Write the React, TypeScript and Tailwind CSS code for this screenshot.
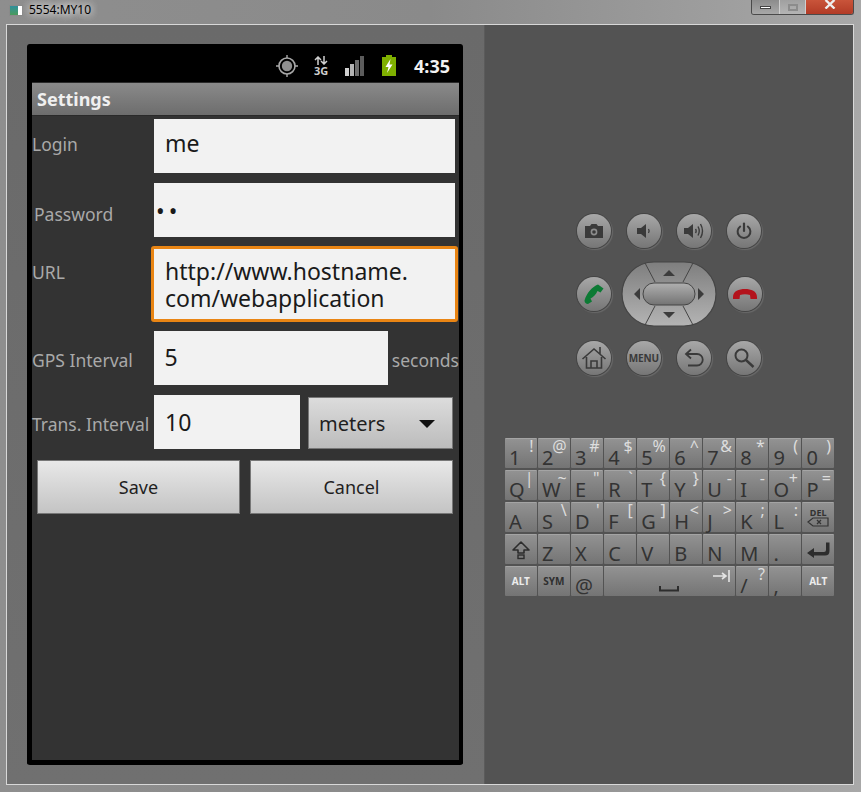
import type { ReactNode } from "react";

type KeyDef = { main?: ReactNode; alt?: string };

const keyRows: KeyDef[][] = [
  [
    { main: "1", alt: "!" },
    { main: "2", alt: "@" },
    { main: "3", alt: "#" },
    { main: "4", alt: "$" },
    { main: "5", alt: "%" },
    { main: "6", alt: "^" },
    { main: "7", alt: "&" },
    { main: "8", alt: "*" },
    { main: "9", alt: "(" },
    { main: "0", alt: ")" },
  ],
  [
    { main: "Q", alt: "|" },
    { main: "W", alt: "~" },
    { main: "E", alt: "\"" },
    { main: "R", alt: "`" },
    { main: "T", alt: "{" },
    { main: "Y", alt: "}" },
    { main: "U", alt: "-" },
    { main: "I", alt: "-" },
    { main: "O", alt: "+" },
    { main: "P", alt: "=" },
  ],
  [
    { main: "A" },
    { main: "S", alt: "\\" },
    { main: "D", alt: "'" },
    { main: "F", alt: "[" },
    { main: "G", alt: "]" },
    { main: "H", alt: "<" },
    { main: "J", alt: ">" },
    { main: "K", alt: ";" },
    { main: "L", alt: ":" },
  ],
  [
    { main: "Z" },
    { main: "X" },
    { main: "C" },
    { main: "V" },
    { main: "B" },
    { main: "N" },
    { main: "M" },
    { main: "." },
  ],
];

function Key({ def }: { def: KeyDef }) {
  return (
    <div className="relative h-[30px] rounded-[1px] border-t border-[#a4a4a4] bg-gradient-to-b from-[#929292] to-[#747474]">
      <span className="absolute bottom-[-2px] left-[4px] text-[20px] leading-[24px] text-[#333333]">{def.main}</span>
      {def.alt && (
        <span className="absolute right-[3px] top-[-3px] text-[16px] leading-[20px] text-[#dddddd]">{def.alt}</span>
      )}
    </div>
  );
}

function IconKey({ children, className = "" }: { children: ReactNode; className?: string }) {
  return (
    <div
      className={`flex h-[30px] items-center justify-center rounded-[1px] border-t border-[#a4a4a4] bg-gradient-to-b from-[#929292] to-[#747474] ${className}`}
    >
      {children}
    </div>
  );
}

function Keyboard() {
  return (
    <div className="grid w-[329px] grid-cols-10 gap-x-[1.5px] gap-y-[2px]">
      {keyRows[0].map((k, i) => (
        <Key key={i} def={k} />
      ))}
      {keyRows[1].map((k, i) => (
        <Key key={i} def={k} />
      ))}
      {keyRows[2].map((k, i) => (
        <Key key={i} def={k} />
      ))}
      <IconKey>
        <div className="flex flex-col items-center leading-none">
          <span className="text-[9px] font-bold leading-[9px] text-[#333333]">DEL</span>
          <svg width="22" height="10" viewBox="0 0 22 10">
            <path d="M1 5 L6 1 H21 V9 H6 Z" fill="none" stroke="#333" strokeWidth="1.2" />
            <path d="M10 3 L14 7 M14 3 L10 7" stroke="#333" strokeWidth="1.3" />
          </svg>
        </div>
      </IconKey>
      <IconKey>
        <svg width="20" height="20" viewBox="0 0 20 20">
          <path d="M10 2 L18 10 H13 V13 H7 V10 H2 Z" fill="none" stroke="#2d2d2d" strokeWidth="1.6" strokeLinejoin="round" />
          <rect x="7" y="15" width="6" height="3.5" fill="none" stroke="#2d2d2d" strokeWidth="1.4" />
        </svg>
      </IconKey>
      {keyRows[3].map((k, i) => (
        <Key key={i} def={k} />
      ))}
      <IconKey>
        <svg width="24" height="18" viewBox="0 0 24 18">
          <path d="M20 1.5 V9 Q20 11 18 11 H8 V7 L1 12 L8 17 V14.5 H19 Q23.5 14.5 23.5 10 V1.5 Z" fill="#2d2d2d" />
        </svg>
      </IconKey>
      <IconKey>
        <span className="text-[10px] font-bold text-[#ececec]">ALT</span>
      </IconKey>
      <IconKey>
        <span className="text-[10px] font-bold text-[#2f2f2f]">SYM</span>
      </IconKey>
      <Key def={{ main: "@" }} />
      <div className="relative col-span-4 h-[30px] rounded-[1px] border-t border-[#a4a4a4] bg-gradient-to-b from-[#929292] to-[#747474]">
        <svg className="absolute bottom-[4px] left-[55px]" width="20" height="6" viewBox="0 0 20 6">
          <path d="M1 0 V4.5 H19 V0" fill="none" stroke="#2d2d2d" strokeWidth="2" />
        </svg>
        <svg className="absolute right-[5px] top-[3px]" width="17" height="12" viewBox="0 0 17 12">
          <path d="M0 6 H12 M9 3 L13 6 L9 9 M16 0 V12" fill="none" stroke="#e4e4e4" strokeWidth="1.6" />
        </svg>
      </div>
      <Key def={{ main: "/", alt: "?" }} />
      <Key def={{ main: "," }} />
      <IconKey>
        <span className="text-[10px] font-bold text-[#ececec]">ALT</span>
      </IconKey>
    </div>
  );
}

function RoundButton({ children }: { children: ReactNode }) {
  return (
    <div className="flex h-[34px] w-[34px] items-center justify-center rounded-full bg-gradient-to-b from-[#a8a8a8] to-[#767676] shadow-[0_0_0_1px_#444444,1px_1px_1px_1px_#6a6a6a]">
      {children}
    </div>
  );
}

function DPad() {
  return (
    <svg width="96" height="66" viewBox="0 0 96 66">
      <defs>
        <linearGradient id="padFill" x1="0" y1="0" x2="0" y2="1">
          <stop offset="0" stopColor="#7e7e7e" />
          <stop offset="1" stopColor="#b4b4b4" />
        </linearGradient>
        <linearGradient id="padCenter" x1="0" y1="0" x2="0" y2="1">
          <stop offset="0" stopColor="#b0b0b0" />
          <stop offset="1" stopColor="#737373" />
        </linearGradient>
      </defs>
      <rect x="1" y="1" width="94" height="64" rx="32" fill="url(#padFill)" stroke="#454545" strokeWidth="1.2" />
      <path d="M24 2 L34 21 M72 2 L62 21 M24 64 L34 45 M72 64 L62 45" stroke="#454545" strokeWidth="1" />
      <rect x="22" y="22" width="52" height="22" rx="11" fill="url(#padCenter)" stroke="#454545" strokeWidth="1" />
      <path d="M48 9 L54 15 H42 Z M48 57 L54 51 H42 Z M13 33 L19 27 V39 Z M83 33 L77 27 V39 Z" fill="#3c3c3c" />
    </svg>
  );
}

function Controls() {
  const dark = "#3a3a3a";
  return (
    <div className="flex w-[186px] flex-col">
      <div className="flex justify-between pr-[1px]">
        <RoundButton>
          <svg width="20" height="16" viewBox="0 0 20 16">
            <path d="M1 3 H6 L7.5 1 H12.5 L14 3 H19 V15 H1 Z" fill={dark} />
            <circle cx="10" cy="9" r="3.4" fill="#8d8d8d" />
            <circle cx="10" cy="9" r="1.8" fill={dark} />
          </svg>
        </RoundButton>
        <RoundButton>
          <svg width="16" height="16" viewBox="0 0 16 16">
            <path d="M1 5 H5 L10 1 V15 L5 11 H1 Z" fill={dark} />
            <path d="M12.5 6 Q13.8 8 12.5 10" fill="none" stroke={dark} strokeWidth="1.3" />
          </svg>
        </RoundButton>
        <RoundButton>
          <svg width="22" height="18" viewBox="0 0 22 18">
            <path d="M1 6 H5 L10 2 V16 L5 12 H1 Z" fill={dark} />
            <path d="M12.5 7 Q13.8 9 12.5 11 M15 4.5 Q17.5 9 15 13.5 M17.5 2 Q21.5 9 17.5 16" fill="none" stroke={dark} strokeWidth="1.4" />
          </svg>
        </RoundButton>
        <RoundButton>
          <svg width="18" height="18" viewBox="0 0 18 18">
            <path d="M9 1.5 V9" stroke={dark} strokeWidth="2.2" strokeLinecap="round" />
            <path d="M5.2 4.5 A6.4 6.4 0 1 0 12.8 4.5" fill="none" stroke={dark} strokeWidth="2" strokeLinecap="round" />
          </svg>
        </RoundButton>
      </div>
      <div className="mt-[13px] flex items-center justify-between pr-[1px]">
        <RoundButton>
          <svg width="22" height="22" viewBox="0 0 22 22">
            <path
              d="M15 1.5 L20.5 5.5 L17.5 9.5 L14.5 8 C13 11.5 10.5 14 7.5 15.5 L9 18.5 L5 21 C3 21 1.5 19.5 1.5 17.5 C4 9.5 9 4 15 1.5 Z"
              fill="#0c7a34"
            />
          </svg>
        </RoundButton>
        <DPad />
        <RoundButton>
          <svg width="26" height="12" viewBox="0 0 26 12">
            <path
              d="M1 9 C1 3 7 1 13 1 C19 1 25 3 25 9 L25 11 H18.5 L18 7 C15 6 11 6 8 7 L7.5 11 H1 Z"
              fill="#b3131c"
            />
          </svg>
        </RoundButton>
      </div>
      <div className="mt-[14px] flex justify-between pr-[1px]">
        <RoundButton>
          <svg width="26" height="24" viewBox="0 0 26 24">
            <path d="M1.5 13 L13 3 L24.5 13 M5.5 11 V22 H20.5 V11 M10 22 V15 H16 V22 M19 8 V1" fill="none" stroke={dark} strokeWidth="1.6" />
          </svg>
        </RoundButton>
        <RoundButton>
          <span className="text-[10px] font-bold tracking-[-0.2px] text-[#3a3a3a]">MENU</span>
        </RoundButton>
        <RoundButton>
          <svg width="22" height="20" viewBox="0 0 22 20">
            <path d="M8 1.5 L3 6 L8 10.5" fill="none" stroke={dark} strokeWidth="1.8" />
            <path d="M3 6 H14 A5.5 5.5 0 0 1 14 17.5 H5" fill="none" stroke={dark} strokeWidth="1.8" />
          </svg>
        </RoundButton>
        <RoundButton>
          <svg width="24" height="24" viewBox="0 0 24 24">
            <circle cx="9.5" cy="9.5" r="6" fill="none" stroke={dark} strokeWidth="2" />
            <path d="M14 14 L21.5 21" stroke={dark} strokeWidth="2.4" />
          </svg>
        </RoundButton>
      </div>
    </div>
  );
}

function StatusBar() {
  return (
    <div className="flex h-[38px] items-center justify-end bg-black pr-[9px] pt-[5px]">
      <svg width="24" height="24" viewBox="0 0 24 24" className="mr-[15px]">
        <circle cx="12" cy="12" r="8" fill="none" stroke="#a8a8a8" strokeWidth="1.6" />
        <circle cx="12" cy="12" r="5.2" fill="#8f8f8f" />
        <path d="M12 1 V4 M12 20 V23 M1 12 H4 M20 12 H23" stroke="#a8a8a8" strokeWidth="1.4" />
      </svg>
      <div className="mr-[17px] flex w-[14px] flex-col items-center">
        <svg width="14" height="9" viewBox="0 0 14 9">
          <path d="M4 9 V2 M1 4 L4 1 L7 4 M10 0 V7 M7 5 L10 8 L13 5" fill="none" stroke="#cfcfcf" strokeWidth="1.5" />
        </svg>
        <span className="mt-[1px] text-[11px] font-bold leading-[10px] text-[#cfcfcf]">3G</span>
      </div>
      <div className="mr-[17px] flex h-[20px] items-end gap-[1px]">
        <div className="h-[8px] w-[4px] bg-[#d0d0d0]" />
        <div className="h-[12px] w-[4px] bg-[#b4b4b4]" />
        <div className="h-[16px] w-[4px] bg-[#6d6d6d]" />
        <div className="h-[20px] w-[4px] bg-[#5c5c5c]" />
      </div>
      <svg width="16" height="22" viewBox="0 0 16 22" className="mr-[17px]">
        <path d="M5 0 H11 V2 H15 V21 H1 V2 H5 Z" fill="#7fb000" />
        <path d="M9.5 4 L4.5 12 H7.5 L6 18 L11.5 9.5 H8.5 Z" fill="#ffffff" />
      </svg>
      <span className="text-[18px] font-bold leading-none text-[#f2f2f2]">4:35</span>
    </div>
  );
}

const inputClass = "flex items-center bg-[#f2f2f2] text-[23px] leading-[27px] text-[#1a1a1a]";
const labelClass = "text-[17.5px] text-[#a9a9a9] leading-[26px]";
const btnClass =
  "flex items-center justify-center h-[54px] border border-[#777777] bg-gradient-to-b from-[#e8e8e8] to-[#c4c4c4] text-[#1f1f1f]";

function SettingsForm() {
  return (
    <div className="flex h-full flex-col bg-[#333333]">
      <div className="flex h-[34px] items-center border-y border-[#2a2a2a] bg-gradient-to-b from-[#8a8a8a] to-[#6d6d6d] pl-[5px] text-[18px] font-bold text-[#f0f0f0]">
        Settings
      </div>
      <div className="mt-[3px] flex h-[54px]">
        <div className={`w-[122px] pt-[12px] ${labelClass}`}>Login</div>
        <div className={`w-[301px] pb-[6px] pl-[11px] ${inputClass}`}>me</div>
      </div>
      <div className="mt-[10px] flex h-[54px]">
        <div className={`w-[122px] pl-[2px] pt-[18px] ${labelClass}`}>Password</div>
        <div className={`w-[301px] pl-[2px] pt-[2px] tracking-[4px] ${inputClass}`}>••</div>
      </div>
      <div className="mt-[9px] flex h-[76px]">
        <div className={`w-[119px] pt-[13px] ${labelClass}`}>URL</div>
        <div className={`w-[307px] rounded-[3px] border-[3px] border-[#e98514] pl-[11px] pt-[1px] ${inputClass}`}>
          http://www.hostname.
          <br />
          com/webapplication
        </div>
      </div>
      <div className="mt-[9px] flex h-[54px]">
        <div className={`w-[122px] pt-[16px] ${labelClass}`}>GPS Interval</div>
        <div className={`w-[235px] pb-[2px] pl-[11px] ${inputClass}`}>5</div>
        <div className={`ml-[4px] pt-[16px] ${labelClass}`}>seconds</div>
      </div>
      <div className="mt-[10px] flex h-[54px]">
        <div className={`w-[122px] whitespace-nowrap pt-[16px] ${labelClass}`}>Trans. Interval</div>
        <div className={`w-[146px] pl-[11px] ${inputClass}`}>10</div>
        <div className="ml-[8px] mt-[2px] flex h-[52px] w-[145px] items-center justify-between border border-[#777777] bg-gradient-to-b from-[#dcdcdc] to-[#bcbcbc] pl-[10px] pr-[17px] pt-[2px] text-[20px] text-[#1f1f1f]">
          meters
          <svg width="16" height="8" viewBox="0 0 16 8">
            <path d="M0 0 H16 L8 8 Z" fill="#111111" />
          </svg>
        </div>
      </div>
      <div className="ml-[5px] mt-[11px] flex gap-[10px] text-[18px]">
        <div className={`w-[203px] ${btnClass}`}>Save</div>
        <div className={`w-[203px] ${btnClass}`}>Cancel</div>
      </div>
    </div>
  );
}

export default function App() {
  return (
    <div
      className="h-[792px] w-[861px] overflow-hidden bg-gradient-to-r from-[#8e8e8e] via-[#8a8a8a] to-[#a8a8a8]"
      style={{ fontFamily: "'Noto Sans', sans-serif" }}
    >
      {/* Window title bar */}
      <div className="flex h-[24px] items-start">
        <div className="ml-[9px] mt-[5px] flex h-[11px] w-[14px] border border-[#8a8a8a] bg-white">
          <div className="w-[8px] bg-gradient-to-b from-[#2f8f9a] to-[#4a9a5a]" />
        </div>
        <span className="ml-[6px] mt-[2px] text-[12px] leading-[16px] text-black [text-shadow:0_0_8px_#ffffff,0_0_8px_#ffffff]">
          5554:MY10
        </span>
        <div className="ml-auto mr-[7px] flex h-[15px] overflow-hidden rounded-b-[3px] border border-t-0 border-[#4a4a4a]">
          <div className="flex w-[27px] items-center justify-center bg-gradient-to-b from-[#8c8c8c] to-[#a8a8a8]">
            <div className="h-[3px] w-[11px] border border-[#444] bg-white" />
          </div>
          <div className="flex w-[26px] items-center justify-center border-l border-[#cfcfcf] bg-gradient-to-b from-[#a0a0a0] to-[#b4b4b4]">
            <div className="h-[7px] w-[10px] border-2 border-[#8c8c8c]" />
          </div>
          <div className="flex w-[48px] items-start justify-center border-l border-[#cfcfcf] bg-gradient-to-b from-[#c9543a] to-[#b23b26]">
            <svg width="12" height="9" viewBox="0 0 12 9">
              <path d="M1.5 0 L10.5 8.5 M10.5 0 L1.5 8.5" stroke="#eeeeee" strokeWidth="2.4" />
            </svg>
          </div>
        </div>
      </div>

      {/* Emulator body */}
      <div className="ml-[6px] flex h-[761px] w-[848px] border border-[#d8d8d8]">
        <div className="w-[478px] border-r border-[#5b5b5b] bg-gradient-to-b from-[#6a6a6a] to-[#707070] pl-[20px] pt-[19px]">
          <div className="h-[721px] w-[436px] rounded-[3px] border-y-0 border-b-[5px] border-l-[5px] border-r-[4px] border-black bg-black">
            <StatusBar />
            <div className="h-[678px]">
              <SettingsForm />
            </div>
          </div>
        </div>
        <div className="flex flex-1 flex-col items-center bg-[#535353] pl-[1px] pt-[189px]">
          <Controls />
          <div className="mt-[63px]">
            <Keyboard />
          </div>
        </div>
      </div>
    </div>
  );
}
